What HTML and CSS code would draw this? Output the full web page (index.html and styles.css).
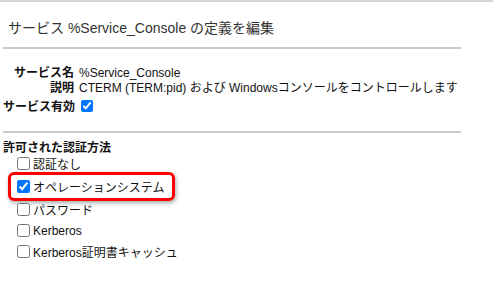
FILE: index.html
```html
<!DOCTYPE html>
<html lang="ja">

<head>
	<meta charset="UTF-8">
	<title>サービスの定義を編集</title>
	<meta name="viewport" content="width=device-width">
	<link rel="stylesheet" href="styles.css">
</head>

<body>
	<div class="topBar"></div>
	<main class="page">
		<h2 class="title">サービス %Service_Console の定義を編集</h2>
		<hr class="rule">

		<div class="info">
			<span class="infoLabel">サービス名</span>
			<span>%Service_Console</span>
			<span class="infoLabel">説明</span>
			<span>CTERM (TERM:pid) および Windowsコンソールをコントロールします</span>
		</div>
		<div class="enabled">
			<label for="svcEnabled">サービス有効</label>
			<input type="checkbox" id="svcEnabled" checked>
		</div>
		<hr class="rule">

		<h3 class="sectionTitle">許可された認証方法</h3>
		<ul class="authList">
			<li><label><input type="checkbox">認証なし</label></li>
			<li class="marked"><label><input type="checkbox" checked>オペレーションシステム</label></li>
			<li><label><input type="checkbox">パスワード</label></li>
			<li><label><input type="checkbox">Kerberos</label></li>
			<li><label><input type="checkbox">Kerberos証明書キャッシュ</label></li>
		</ul>
	</main>
</body>

</html>
```

FILE: styles.css
```css
body {
	margin: 0;
	font-family: "Liberation Sans", "Noto Sans CJK JP", sans-serif;
	font-size: 12px;
	color: #111;
	background: #fff;
}

.topBar {
	height: 2px;
	background: #d6d6d6;
}

.page {
	width: 458px;
	padding: 0 3px;
}

.title {
	margin: 0;
	padding: 17px 5px 0;
	font-size: 14px;
	font-weight: normal;
	color: #333;
	line-height: 18px;
}

.rule {
	margin: 10px 0 0;
	border: 0;
	border-top: 2px solid #c8c8c8;
}

.info {
	display: grid;
	grid-template-columns: 71px auto;
	column-gap: 5px;
	row-gap: 1px;
	margin-top: 17px;
	line-height: 14px;
}

.infoLabel {
	text-align: end;
	font-weight: bold;
}

.enabled {
	display: flex;
	align-items: center;
	gap: 6px;
	margin-top: 2px;
	font-weight: bold;
}

.enabled input {
	margin: 0;
	width: 12px;
	height: 12px;
}

.enabled + .rule {
	margin-top: 17px;
}

.sectionTitle {
	margin: 8px 0 0;
	font-size: 12px;
	line-height: 14px;
}

.authList {
	list-style: none;
	margin: -2px 0 0;
	padding: 0 0 0 14px;
}

.authList li {
	position: relative;
	height: 21px;
	display: flex;
	align-items: center;
}

.authList li.marked {
	margin: 2px 0;
}

.authList label {
	display: flex;
	align-items: center;
	gap: 3px;
}

.authList input {
	margin: 0;
	width: 13px;
	height: 13px;
}

/* red annotation box round the chosen method */
.marked::after {
	content: "";
	position: absolute;
	left: -9px;
	top: -4px;
	width: 161px;
	height: 23px;
	border: 3px solid #f00;
	border-radius: 6px;
	box-shadow: 1px 2px 4px rgba(0, 0, 0, 0.35);
}
```
